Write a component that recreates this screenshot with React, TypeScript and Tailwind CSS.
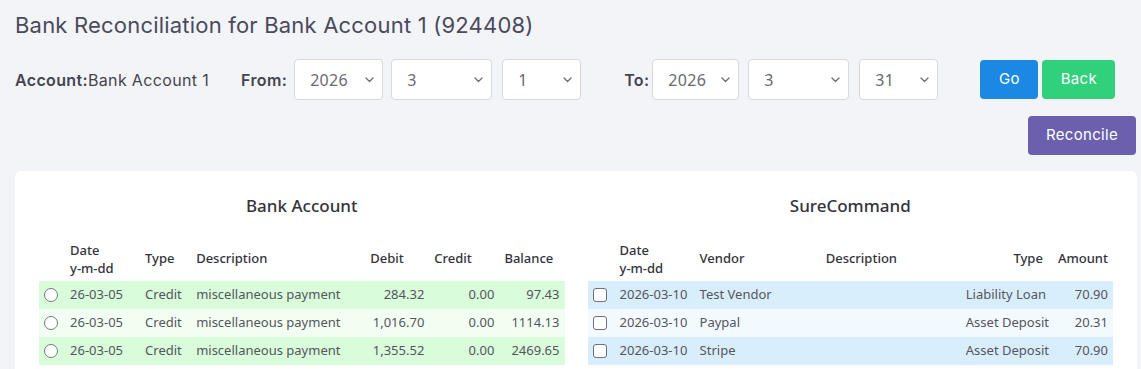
import React from "react";

const font = "font-['Noto_Sans','Open_Sans',sans-serif]";
const inter = "font-['Inter','Noto_Sans',sans-serif]";

function Chevron() {
  return (
    <svg width="9" height="6" viewBox="0 0 9 6" fill="none" className="shrink-0">
      <path d="M1 1l3.5 3.5L8 1" stroke="#6b6b75" strokeWidth="1.3" strokeLinecap="round" strokeLinejoin="round" />
    </svg>
  );
}

function FakeSelect({ value, w }: { value: string; w: string }) {
  return (
    <div className={`${w} h-[41px] bg-white border border-[#d6d8dc] rounded-[4px] flex items-center justify-between pl-[15px] pr-[8px] text-[16px] tracking-[0.3px] text-[#6a6a72] ${font}`}>
      <span>{value}</span>
      <Chevron />
    </div>
  );
}

function Radio() {
  return <span className="block w-[14px] h-[14px] rounded-full border border-[#77777f] bg-white" />;
}

function Checkbox() {
  return <span className="block w-[14px] h-[14px] rounded-[3px] border border-[#6f6f78] bg-white" />;
}

const bankRows = [
  { date: "26-03-05", type: "Credit", desc: "miscellaneous payment", debit: "284.32", credit: "0.00", bal: "97.43" },
  { date: "26-03-05", type: "Credit", desc: "miscellaneous payment", debit: "1,016.70", credit: "0.00", bal: "1114.13" },
  { date: "26-03-05", type: "Credit", desc: "miscellaneous payment", debit: "1,355.52", credit: "0.00", bal: "2469.65" },
];

const sureRows = [
  { date: "2026-03-10", vendor: "Test Vendor", desc: "", type: "Liability Loan", amount: "70.90" },
  { date: "2026-03-10", vendor: "Paypal", desc: "", type: "Asset Deposit", amount: "20.31" },
  { date: "2026-03-10", vendor: "Stripe", desc: "", type: "Asset Deposit", amount: "70.90" },
];

export default function App() {
  return (
    <div className={`min-h-screen bg-[#f3f4f7] ${font} overflow-hidden`}>
      <div className="pl-[15px] pt-[9px]">
        <h1 className={`${inter} text-[22px] leading-[32px] tracking-[0.2px] text-[#4a4a5c] font-normal`}>
          Bank Reconciliation for Bank Account 1 (924408)
        </h1>
        <div className="mt-[18px] flex items-center h-[41px]">
          <div className={`${inter} flex items-center text-[16px] tracking-[0.35px] text-[#45454f]`}>
            <span className="font-semibold">Account:</span>
            <span>Bank Account 1</span>
            <span className="font-semibold ml-[32px] mr-[7px]">From:</span>
          </div>
          <FakeSelect value="2026" w="w-[89px]" />
          <div className="w-[8px]" />
          <FakeSelect value="3" w="w-[101px]" />
          <div className="w-[10px]" />
          <FakeSelect value="1" w="w-[79px]" />
          <span className={`${inter} text-[16px] tracking-[0.35px] text-[#45454f] font-semibold ml-[43px] mr-[3px]`}>To:</span>
          <FakeSelect value="2026" w="w-[87px]" />
          <div className="w-[9px]" />
          <FakeSelect value="3" w="w-[101px]" />
          <div className="w-[10px]" />
          <FakeSelect value="31" w="w-[79px]" />
          <div className={`${inter} ml-[42px] flex gap-[4px] text-[15px] tracking-[0.3px] text-white`}>
            <button className="w-[58px] h-[39px] rounded-[4px] bg-[#1b89e3]">Go</button>
            <button className="w-[73px] h-[39px] rounded-[4px] bg-[#31d07b]">Back</button>
          </div>
        </div>
        <div className="mt-[16px] flex justify-end pr-[5px]">
          <button className={`${inter} w-[108px] h-[39px] rounded-[4px] bg-[#6b5fae] text-white text-[15px] tracking-[0.3px]`}>Reconcile</button>
        </div>
      </div>

      <div className="mt-[16px] ml-[15px] mr-[4px] bg-white rounded-[6px] px-[24px] pt-[23px] pb-[20px] grid grid-cols-2 gap-x-[23px]">
        <div>
          <h2 className="text-center text-[17px] leading-[24px] font-medium text-[#33333b]">Bank Account</h2>
          <table className="mt-[19px] w-full table-fixed border-collapse text-[13px]">
            <colgroup>
              <col className="w-[26px]" />
              <col className="w-[75px]" />
              <col className="w-[51px]" />
              <col className="w-[174px]" />
              <col className="w-[64px]" />
              <col className="w-[70px]" />
              <col className="w-[65px]" />
            </colgroup>
            <thead>
              <tr className="text-[#33333b] text-left">
                <th className="px-[5px] py-[4px]"></th>
                <th className="px-[5px] py-[4px] leading-[18px] font-medium">Date<br />y-m-dd</th>
                <th className="px-[5px] py-[4px] font-medium">Type</th>
                <th className="px-[5px] py-[4px] font-medium">Description</th>
                <th className="px-[5px] py-[4px] font-medium">Debit</th>
                <th className="px-[5px] py-[4px] font-medium">Credit</th>
                <th className="px-[5px] py-[4px] font-medium">Balance</th>
              </tr>
            </thead>
            <tbody className="text-[#55555e]">
              {bankRows.map((r, i) => (
                <tr key={i} className={`h-[28px] ${i % 2 === 0 ? "bg-[#d9fcdb]" : "bg-[#f3fef3]"}`}>
                  <td className="px-[5px]"><Radio /></td>
                  <td className="px-[5px] whitespace-nowrap">{r.date}</td>
                  <td className="px-[5px]">{r.type}</td>
                  <td className="px-[5px] whitespace-nowrap">{r.desc}</td>
                  <td className="px-[5px] text-right">{r.debit}</td>
                  <td className="px-[5px] text-right">{r.credit}</td>
                  <td className="px-[5px] text-right">{r.bal}</td>
                </tr>
              ))}
            </tbody>
          </table>
        </div>

        <div>
          <h2 className="text-center text-[17px] leading-[24px] font-medium text-[#33333b]">SureCommand</h2>
          <table className="mt-[19px] w-full table-fixed border-collapse text-[13px]">
            <colgroup>
              <col className="w-[27px]" />
              <col className="w-[80px]" />
              <col className="w-[126px]" />
              <col className="w-[140px]" />
              <col className="w-[87px]" />
              <col className="w-[65px]" />
            </colgroup>
            <thead>
              <tr className="text-[#33333b] text-left">
                <th className="px-[5px] py-[4px]"></th>
                <th className="px-[5px] py-[4px] leading-[18px] font-medium">Date<br />y-m-dd</th>
                <th className="px-[5px] py-[4px] font-medium">Vendor</th>
                <th className="px-[5px] py-[4px] font-medium">Description</th>
                <th className="px-[5px] py-[4px] font-medium text-right">Type</th>
                <th className="px-[5px] py-[4px] font-medium text-right">Amount</th>
              </tr>
            </thead>
            <tbody className="text-[#55555e]">
              {sureRows.map((r, i) => (
                <tr key={i} className={`h-[28px] ${i % 2 === 0 ? "bg-[#d9eefc]" : "bg-[#f3fafe]"}`}>
                  <td className="px-[5px]"><Checkbox /></td>
                  <td className="px-[5px] whitespace-nowrap">{r.date}</td>
                  <td className="px-[5px] whitespace-nowrap">{r.vendor}</td>
                  <td className="px-[5px]">{r.desc}</td>
                  <td className="px-[5px] text-right whitespace-nowrap">{r.type}</td>
                  <td className="px-[5px] text-right">{r.amount}</td>
                </tr>
              ))}
            </tbody>
          </table>
        </div>
      </div>
    </div>
  );
}
